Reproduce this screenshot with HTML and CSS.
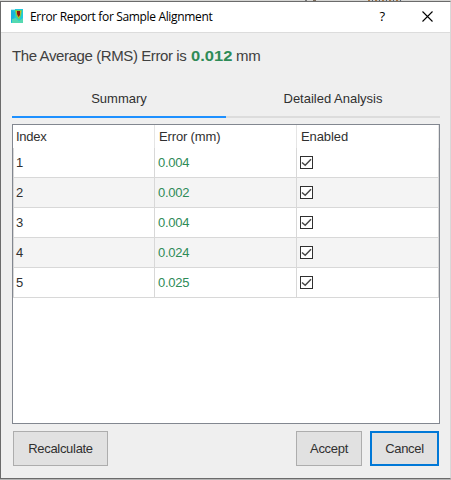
FILE: index.html
```html
<!DOCTYPE html>
<html lang="en">
<head>
<meta charset="utf-8">
<title>Error Report for Sample Alignment</title>
<link rel="stylesheet" href="styles.css">
</head>
<body>
<div class="backdrop"><i class="mark-a"></i><i class="mark-b"></i><i class="mark-c"></i></div>
<div class="dialog">
  <header class="titlebar">
    <svg class="app-icon" width="12" height="14" viewBox="0 0 12 14">
      <rect width="12" height="14" fill="#20c9dc"/>
      <path d="M0 1L4 3L3 13H0z" fill="#19b3dc"/>
      <path d="M1 10L5 9L8 12L12 9V14H1z" fill="#55d9b0"/>
      <path d="M4 1H11L10 7L8 11L5 7z" fill="#62d65a"/>
      <path d="M5 2H10L9 7L7.5 9L6 6z" fill="#e8a51c"/>
      <path d="M6 2H9V6L7.5 8L6 5z" fill="#8a1710"/>
      <path d="M0 0H4V1H0z" fill="#b8edf2"/>
    </svg>
    <h1 class="title">Error Report for Sample Alignment</h1>
    <span class="help">?</span>
    <svg class="close" width="11" height="11" viewBox="0 0 11 11"><path d="M.5 .5L10.5 10.5M10.5 .5L.5 10.5" fill="none" stroke="#000" stroke-width="1.1"/></svg>
  </header>
  <main class="content">
    <p class="average"><span class="average-label">The Average (RMS) Error is</span><b class="average-value">0.012</b><span>mm</span></p>
    <nav class="tabs">
      <span class="tab active">Summary</span>
      <span class="tab">Detailed Analysis</span>
    </nav>
    <section class="table">
      <div class="row head"><span>Index</span><span>Error (mm)</span><span>Enabled</span></div>
      <div class="row"><span>1</span><span class="error">0.004</span><span><svg class="check" viewBox="0 0 11 11"><path d="M1 5.5L4.2 8.3L10 2.3"/></svg></span></div>
      <div class="row alt"><span>2</span><span class="error">0.002</span><span><svg class="check" viewBox="0 0 11 11"><path d="M1 5.5L4.2 8.3L10 2.3"/></svg></span></div>
      <div class="row"><span>3</span><span class="error">0.004</span><span><svg class="check" viewBox="0 0 11 11"><path d="M1 5.5L4.2 8.3L10 2.3"/></svg></span></div>
      <div class="row alt"><span>4</span><span class="error">0.024</span><span><svg class="check" viewBox="0 0 11 11"><path d="M1 5.5L4.2 8.3L10 2.3"/></svg></span></div>
      <div class="row"><span>5</span><span class="error">0.025</span><span><svg class="check" viewBox="0 0 11 11"><path d="M1 5.5L4.2 8.3L10 2.3"/></svg></span></div>
    </section>
    <footer class="actions">
      <button class="button recalculate">Recalculate</button>
      <button class="button accept">Accept</button>
      <button class="button cancel">Cancel</button>
    </footer>
  </main>
</div>
</body>
</html>
```
FILE: styles.css
```css
* { box-sizing: border-box; }
body {
  margin: 0;
  width: 451px;
  height: 480px;
  overflow: hidden;
  background: #b4b4b4;
  color: #303030;
  font: 13px/16px "Liberation Sans", Arial, sans-serif;
}
.backdrop { display: flex; height: 1px; background: #d5d5d3; }
.backdrop i { height: 1px; }
.mark-a { width: 2px; margin-left: 305px; background: #777; }
.mark-b { width: 3px; margin-left: 6px; background: #786858; }
.mark-c { width: 34px; margin-left: 52px; background: repeating-linear-gradient(90deg, #a37540 0 2px, #c5c5c5 2px 4px, #505f70 4px 5px, #ccc 5px 7px); }
.dialog {
  height: 478px;
  background: #efefef;
  border: 1px solid #6b6b6b;
  border-right-color: #d8d8d8;
}
.titlebar {
  display: flex;
  align-items: center;
  height: 31px;
  padding: 0 17px 2px 10px;
  background: #fff;
  border-bottom: 1px solid #dcdcdc;
}
.app-icon { margin-right: 7px; }
.title {
  margin: 0;
  padding-top: 2px;
  color: #000;
  font: 400 12px/16px "Open Sans", sans-serif;
  letter-spacing: -0.34px;
  white-space: nowrap;
}
.help { margin-left: auto; margin-right: 37px; color: #000; font: 13px/16px "Open Sans", sans-serif; }
.content { padding: 14px 10px 0 11px; }
.average {
  display: flex;
  align-items: baseline;
  height: 20px;
  margin: 0;
  color: #404040;
  font-size: 15px;
  line-height: 18px;
  letter-spacing: -0.3px;
  white-space: nowrap;
}
.average-label { width: 179px; letter-spacing: -0.4px; }
.average-value {
  width: 45px;
  color: #2e8b57;
  font-size: 14px;
  letter-spacing: 0;
  transform: scaleX(1.18);
  transform-origin: left;
}
.tabs { display: flex; height: 37px; margin-top: 14px; }
.tab {
  flex: 1;
  padding-top: 10px;
  border-bottom: 2px solid #dcdcdc;
  text-align: center;
}
.tab.active { border-color: #1e90ff; }
.table {
  height: 300px;
  margin-top: 6px;
  background: #fff;
  border: 1px solid #828790;
}
.row {
  display: grid;
  grid-template-columns: 141px 142px 142px;
  height: 30px;
  border-bottom: 1px solid #d8d8d8;
  border-left: 1px solid #d8d8d8;
  line-height: 29px;
}
.row > span { display: flex; align-items: center; padding-left: 3px; border-right: 1px solid #d8d8d8; }
.row > span:first-child { padding-left: 2px; }
.row.alt { background: #f4f4f4; }
.row.head { height: 23px; border-bottom: 0; border-left-color: #fff; line-height: 23px; }
.row.head > span { border-right-color: #e5e5e5; letter-spacing: -0.25px; }
.row.head > span:nth-child(n+2) { padding-left: 4px; letter-spacing: -0.15px; }
.row.head > span:last-child { letter-spacing: -0.1px; }
.row .error { color: #2e8b57; letter-spacing: -0.25px; }
.check { width: 13px; height: 13px; border: 1px solid #303030; background: #fff; }
.check path { fill: none; stroke: #484848; stroke-width: 1.5; }
.actions { display: flex; padding: 7px 1px 0; }
.button {
  height: 35px;
  padding: 0;
  border: 1px solid #adadad;
  border-radius: 0;
  background: #e1e1e1;
  color: #303030;
  font: 13px/16px "Liberation Sans", Arial, sans-serif;
  letter-spacing: -0.3px;
}
.recalculate { width: 95px; }
.accept { width: 66px; margin-left: auto; margin-right: 8px; }
.cancel { width: 69px; border: 2px solid #0078d7; }
```
